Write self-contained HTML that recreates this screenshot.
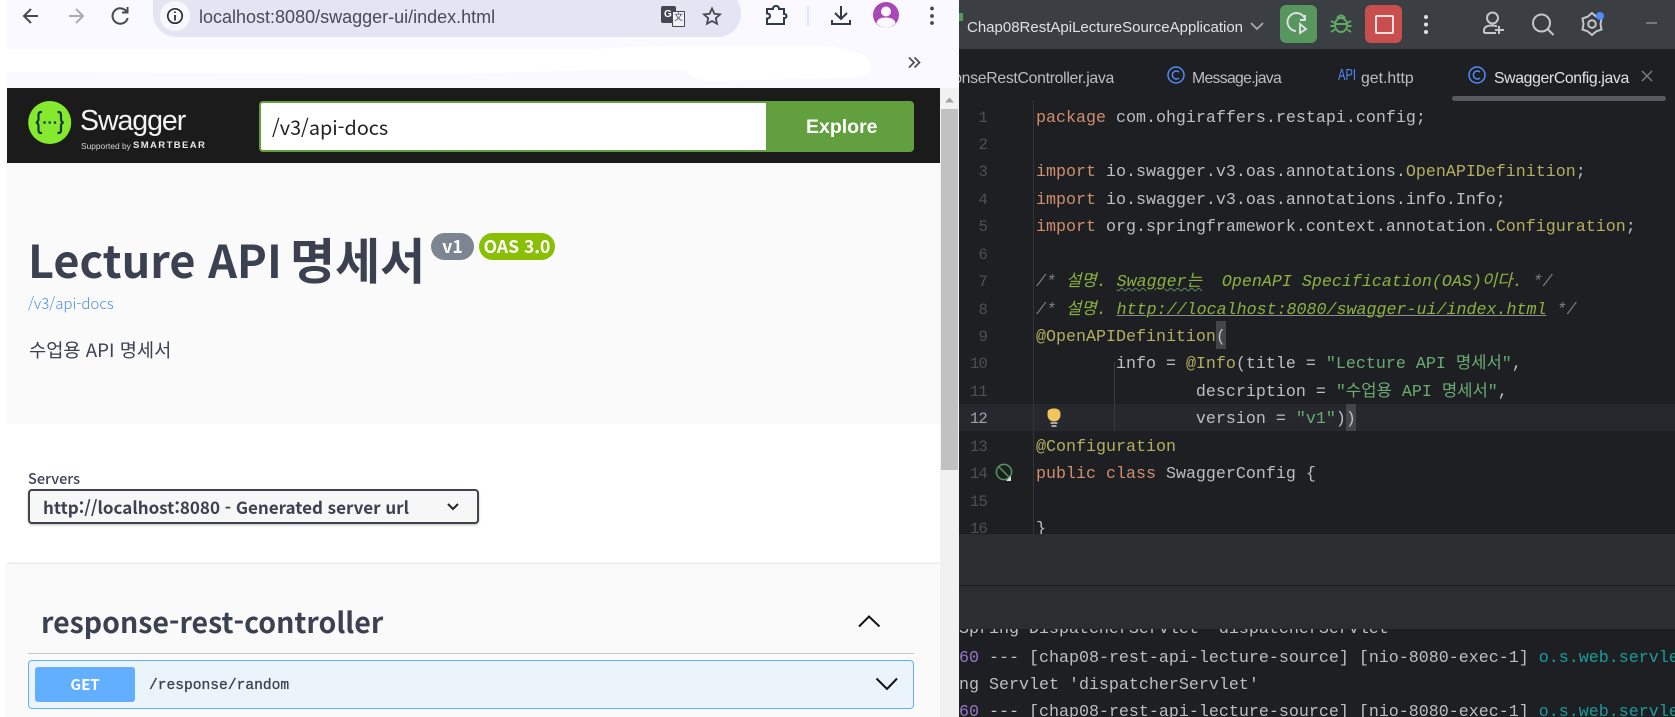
<!DOCTYPE html>
<html lang="ko"><head><meta charset="utf-8"><title>Swagger UI</title>
<style>
html,body{margin:0;padding:0;width:1675px;height:717px;overflow:hidden;background:#fff}
body{position:relative;font-family:"Liberation Sans","Noto Sans CJK KR",sans-serif}
.a{position:absolute}
.t{position:absolute;white-space:nowrap;line-height:1}
.k{font-family:"Noto Sans CJK KR","Liberation Sans",sans-serif}
svg{position:absolute;overflow:visible}
#code{position:absolute;left:959px;top:100px;width:716px;height:434px;background:#1e1f22;overflow:hidden}
.l{position:absolute;left:77px;margin-top:2px;white-space:pre;height:27.43px;line-height:27.43px;font:16.67px/27.43px "Liberation Mono","Noto Sans CJK KR",monospace;color:#bcbec4}
.n{position:absolute;width:28px;text-align:right;left:0;margin-top:2px;height:27.43px;font:15.6px/27.43px "Liberation Mono",monospace;letter-spacing:-.8px;color:#4b5059}
.kw{color:#cf8e6d}.an{color:#b3ae60}.st{color:#6aab73}.cm{color:#7a7e85;font-style:italic}.cg{color:#8bb33f;font-style:italic}
.tab{position:absolute;white-space:nowrap;font-size:15.8px;line-height:1;color:#bcbec4;top:71px}
.c{position:absolute;left:0;white-space:pre;font:16.67px/27.43px "Liberation Mono",monospace;color:#bcbec4}
</style></head><body>

<!-- browser chrome -->
<div class="a" style="left:7px;top:0;width:952px;height:88px;background:#f9f9ff"></div>
<svg style="left:0;top:0" width="959" height="88"><path d="M7 49 L590 49 Q640 46 700 46 L820 46 Q850 48 860 54 Q872 58 870 68 Q868 78 850 78 L710 81 Q690 80 686 70 L600 70 L450 74 L7 72 Z" fill="#fff"/></svg>
<div class="a" style="left:153px;top:-10px;width:588px;height:47px;background:#e3e6f2;border-radius:0 24px 24px 24px/0 24px 24px 24px;border-top-left-radius:0;border-bottom-left-radius:24px"></div>
<div class="a" style="left:160px;top:1px;width:30px;height:30px;border-radius:50%;background:#f7f8fd"></div>
<svg style="left:0;top:0" width="959" height="40" fill="none" stroke="#474a52" stroke-width="2">
<path d="M38 16 H24 M31 9 L24 16 L31 23" stroke-width="2"/>
<path d="M69 16 H83 M76 9 L83 16 L76 23" stroke="#a9abb2"/>
<path d="M126.500 11.500 A7.700 7.700 0 1 0 127.700 18" /><path d="M127.500 7 V12.500 H122" />
<circle cx="175" cy="16" r="7.2" stroke="#2b2d31" stroke-width="1.7"/><path d="M175 15 V20.5 M175 11.5 V13" stroke="#2b2d31" stroke-width="1.8"/>
<path d="M712 8.5 L714.4 13.8 L720 14.4 L715.8 18.2 L717 23.8 L712 21 L707 23.8 L708.2 18.2 L704 14.4 L709.6 13.8 Z" stroke-width="1.8"/>
<path d="M767 9 H773 Q773 6 776 6 Q779 6 779 9 H784 V14 Q786.500 14 786.500 16 Q786.500 18 784 18 V24 H767 V18.500 Q770 18.500 770 16 Q770 13.500 767 13.500 Z" stroke="#2f3a4a" stroke-width="2"/>
<path d="M808 6 V26" stroke="#d3e3fd" stroke-width="1.5"/>
<path d="M841 6 V18 M835 13 L841 19 L847 13 M832 20 V24 H850 V20" stroke="#2f3a4a" stroke-width="2"/>
</svg>
<!-- translate icon -->
<div class="a" style="left:661px;top:6px;width:15px;height:17px;background:#444750;border-radius:2px"></div>
<div class="a" style="left:672px;top:11px;width:11px;height:14px;background:#f1f2f8;border:1px solid #444750;border-radius:1px"></div>
<div class="t" style="left:664px;top:10px;font-size:10px;font-weight:700;color:#fff">G</div>
<div class="t" style="left:674px;top:13px;font-size:9px;color:#444750">文</div>
<svg style="left:0;top:0" width="959" height="40"><circle cx="886" cy="15" r="13" fill="#a847b5"/><circle cx="886" cy="11.500" r="5" fill="#f9f9ff"/><path d="M876.500 23.500 Q877 17.500 886 17.500 Q895 17.500 895.500 23.500 Q891 28 886 28 Q881 28 876.500 23.500Z" fill="#f9f9ff"/>
<circle cx="932" cy="8.500" r="1.900" fill="#424650"/><circle cx="932" cy="16" r="1.900" fill="#424650"/><circle cx="932" cy="23" r="1.900" fill="#424650"/></svg>
<div class="t" style="left:199px;top:8px;font-size:18px;color:#474b55">localhost:8080/swagger-ui/index.html</div>
<svg style="left:0;top:0" width="959" height="88" fill="none" stroke="#4a4d55" stroke-width="1.700"><path d="M909 57.500 L914 62.500 L909 67.500 M914.500 57.500 L919.500 62.500 L914.500 67.500"/></svg>

<!-- swagger header -->
<div class="a" style="left:7px;top:88px;width:933px;height:75px;background:#1b1b1b"></div>
<svg style="left:0;top:0" width="260" height="163"><circle cx="49.700" cy="122.500" r="21.500" fill="#85ea2d"/>
<g fill="none" stroke="#173647" stroke-width="2.200"><path d="M42 112 H41 Q38.500 112 38.500 115 V119 Q38.500 122 36 122.500 Q38.500 123 38.500 126 V130 Q38.500 133 41 133 H42"/><path d="M57.500 112 H58.500 Q61 112 61 115 V119 Q61 122 63.500 122.500 Q61 123 61 126 V130 Q61 133 58.500 133 H57.500"/></g>
<circle cx="44.500" cy="122.500" r="1.300" fill="#173647"/><circle cx="49.700" cy="122.500" r="1.300" fill="#173647"/><circle cx="55" cy="122.500" r="1.300" fill="#173647"/></svg>
<div class="t" style="left:80px;top:107px;font-size:28.500px;color:#f2f2f2;letter-spacing:-1.050px;font-weight:400">Swagger</div>
<div class="t" style="left:81px;top:142px;font-size:8.400px;color:#d5d5d5">Supported by</div>
<div class="t" style="left:133px;top:140.500px;font-size:9.500px;font-weight:700;color:#e8e8e8;letter-spacing:1.400px">SMARTBEAR</div>
<div class="a" style="left:259px;top:101px;width:508px;height:51px;box-sizing:border-box;background:#fff;border:2px solid #62a03f;border-right:0;border-radius:4px 0 0 4px"></div>
<div class="t k" style="left:272px;top:117px;font-size:19.800px;color:#222">/v3/api-docs</div>
<div class="a" style="left:766px;top:101px;width:148px;height:51px;background:#62a03f;border-radius:0 4px 4px 0"></div>
<div class="t" style="left:806px;top:118px;font-size:19.500px;font-weight:700;color:#fff">Explore</div>

<!-- info -->
<div class="a" style="left:7px;top:163px;width:933px;height:261px;background:#fafafa"></div>
<div class="t k" style="left:28px;top:232px;font-size:45px;font-weight:700;color:#3b4151;line-height:54px">Lecture API</div>
<div class="t k" style="left:290px;top:232px;font-size:49px;font-weight:700;color:#3b4151;line-height:54px">명세서</div>
<div class="a" style="left:431px;top:233px;width:43px;height:27px;border-radius:14px;background:#7d8492"></div>
<div class="t k" style="left:431px;top:233px;width:43px;text-align:center;font-size:17.500px;font-weight:700;line-height:27px;color:#fff">v1</div>
<div class="a" style="left:479px;top:233px;width:76px;height:27px;border-radius:14px;background:#89bf04"></div>
<div class="t k" style="left:479px;top:233px;width:76px;text-align:center;font-size:17.500px;font-weight:700;line-height:27px;color:#fff">OAS 3.0</div>
<div class="t k" style="left:28px;top:296px;font-size:15px;font-weight:300;color:#4990e2">/v3/api-docs</div>
<div class="t k" style="left:29px;top:341px;font-size:18.700px;color:#3b4151">수업용 API 명세서</div>

<!-- servers -->
<div class="t k" style="left:28px;top:472px;font-size:14.500px;font-weight:500;color:#3b4151">Servers</div>
<div class="a" style="left:28px;top:489px;width:451px;height:35px;box-sizing:border-box;background:#f7f7f7;border:2px solid #41444e;border-radius:4px;box-shadow:0 1px 2px rgba(0,0,0,.25)"></div>
<div class="t k" style="left:43px;top:498px;font-size:17px;font-weight:700;color:#3b4151">http://localhost:8080 - Generated server url</div>
<svg style="left:0;top:0" width="500" height="530" fill="none" stroke="#222" stroke-width="2"><path d="M448 504 L453 509 L458 504"/></svg>

<!-- section -->
<div class="a" style="left:7px;top:564px;width:933px;height:153px;background:#fafafa;box-shadow:0 -1px 2px rgba(0,0,0,.12)"></div>
<div class="t k" style="left:41px;top:608px;font-size:28.500px;font-weight:700;color:#3b4151">response-rest-controller</div>
<div class="a" style="left:28px;top:653px;width:886px;height:1px;background:#c6c6c8"></div>
<svg style="left:0;top:0" width="940" height="717" fill="none" stroke="#111" stroke-width="2"><path d="M859 626.500 L869 616.500 L879.500 626.500"/></svg>
<div class="a" style="left:28px;top:660px;width:886px;height:49px;box-sizing:border-box;background:#ebf3fb;border:1px solid #61affe;border-radius:4px"></div>
<div class="a" style="left:35px;top:667px;width:100px;height:35px;background:#61affe;border-radius:3px"></div>
<div class="t k" style="left:35px;top:667px;width:100px;text-align:center;font-size:15px;font-weight:700;line-height:35px;color:#fff">GET</div>
<div class="t" style="left:149px;top:678.500px;font-family:'Liberation Mono',monospace;font-size:14.600px;color:#3b4151;-webkit-text-stroke:.3px #3b4151">/response/random</div>
<svg style="left:0;top:0" width="940" height="717" fill="none" stroke="#111" stroke-width="2"><path d="M876.500 678.500 L887 689 L897 678.500"/></svg>

<!-- scrollbar -->
<div class="a" style="left:940px;top:88px;width:19px;height:629px;background:#f1f1f1"></div>
<div class="a" style="left:941px;top:109px;width:17px;height:361px;background:#c1c1c1"></div>
<svg style="left:0;top:0" width="959" height="110"><path d="M945 102.500 L949.500 97.500 L954 102.500 Z" fill="#a3a3a3"/></svg>

<!-- IDE toolbar -->
<div class="a" style="left:959px;top:0;width:716px;height:49px;background:#3b3e42"></div>
<div class="a" style="left:959px;top:13px;width:4px;height:8px;background:#57965c"></div>
<div class="t" style="left:967px;top:20px;font-size:15px;color:#dfe1e5">Chap08RestApiLectureSourceApplication</div>
<svg style="left:0;top:0" width="1675" height="49" fill="none"><path d="M1251 23 L1257 29 L1263 23" stroke="#a9abb2" stroke-width="1.700"/></svg>
<div class="a" style="left:1280px;top:5px;width:37px;height:38px;border-radius:6px;background:#57965c"></div>
<svg style="left:0;top:0" width="1675" height="49" fill="none" stroke="#dfe1e5" stroke-width="1.900">
<path d="M1296 31 A9 9 0 1 1 1305 19 M1305 15 V20 H1300"/><path d="M1300 24 L1306 29 L1300 33 Z"/>
<g stroke="#5fad65"><ellipse cx="1341" cy="25" rx="6" ry="7"/><path d="M1337 18 Q1341 13 1345 18 M1331 21 L1335 23 M1351 21 L1347 23 M1330.500 26 H1335 M1351.500 26 H1347 M1331 32 L1335 29.500 M1351 32 L1347 29.500 M1335 24 H1347"/></g>
</svg>
<div class="a" style="left:1365px;top:5px;width:37px;height:38px;border-radius:6px;background:#c94f4f"></div>
<div class="a" style="left:1375px;top:15px;width:15px;height:15px;box-sizing:content-box;border:2px solid #f0e0e0;border-radius:2px"></div>
<svg style="left:0;top:0" width="1675" height="49" fill="none" stroke="#c4c6cc" stroke-width="2">
<circle cx="1426" cy="17" r="2" fill="#dfe1e5" stroke="none"/><circle cx="1426" cy="24.500" r="2" fill="#dfe1e5" stroke="none"/><circle cx="1426" cy="32" r="2" fill="#dfe1e5" stroke="none"/>
<circle cx="1492.500" cy="18" r="5.500"/><path d="M1484 33 V30.500 Q1484 25.500 1492 25.500 Q1495 25.500 1497 26.500 M1484 33 H1496 M1499 26 V34 M1495 30 H1504"/>
<circle cx="1541.500" cy="23" r="8.500"/><path d="M1548 29.500 L1553.500 35"/>
<path d="M1592 13 L1596.250 16.640 L1601.530 18.500 L1600.500 24 L1601.530 29.500 L1596.250 31.360 L1592 35 L1587.750 31.360 L1582.470 29.500 L1583.500 24 L1582.470 18.500 L1587.750 16.640 Z" stroke-linejoin="round"/><circle cx="1592" cy="24" r="3.800"/>
<path d="M1646 23 H1657" stroke="#8a8c92" stroke-width="1.500"/></svg>
<div class="a" style="left:1596px;top:11.500px;width:8px;height:8px;border-radius:50%;background:#548af7"></div>

<!-- tabs -->
<div class="a" style="left:959px;top:49px;width:716px;height:51px;background:#1e1f22"></div>
<div class="a" style="left:959px;top:100px;width:716px;height:1px;background:#393b40"></div>
<div class="tab" style="left:959px;overflow:hidden;width:155px;direction:rtl;letter-spacing:-.3px">onseRestController.java</div>
<div class="tab" style="left:1192px;letter-spacing:-.7px">Message.java</div>
<div class="tab" style="left:1361px">get.http</div>
<div class="tab" style="left:1494px;color:#dfe1e5;letter-spacing:-.36px">SwaggerConfig.java</div>
<svg style="left:0;top:0" width="1675" height="110" fill="none">
<circle cx="1176" cy="75" r="8" stroke="#548af7" stroke-width="1.500"/><path d="M1179 72 A4 4 0 1 0 1179 78" stroke="#548af7" stroke-width="1.500"/>
<circle cx="1477" cy="75" r="8" stroke="#548af7" stroke-width="1.500"/><path d="M1480 72 A4 4 0 1 0 1480 78" stroke="#548af7" stroke-width="1.500"/>
<path d="M1642 71 L1652 81 M1652 71 L1642 81" stroke="#7a7e85" stroke-width="1.400"/>
<path d="M1662 116 L1666 120 L1675 110" stroke="#5fad65" stroke-width="2"/><path d="M1662 125 L1665 123 L1668 125 L1671 123 L1675 125" stroke="#5fad65" stroke-width="1.200"/>
</svg>
<div class="t" style="left:1338px;top:68px;font-family:'Liberation Sans',sans-serif;font-size:15.500px;color:#548af7;transform:scaleX(.72);transform-origin:left">API</div>
<div class="a" style="left:1452px;top:96px;width:214px;height:5px;border-radius:3px;background:#585a60;z-index:3"></div>

<!-- editor -->
<div id="code">
<div class="a" style="left:0;top:304px;width:716px;height:27px;background:#26282e"></div>
<div class="a" style="left:74px;top:0;width:1px;height:434px;background:#313438"></div>
<div class="a" style="left:155px;top:262px;width:1px;height:69px;background:#393b40"></div>
<div class="a" style="left:257px;top:221px;width:10px;height:28px;background:#43454a"></div>
<div class="a" style="left:387px;top:304px;width:10px;height:27px;background:#43454a"></div>

<div class="n" style="top:2.500px">1</div><div class="n" style="top:29.900px">2</div><div class="n" style="top:57.400px">3</div><div class="n" style="top:84.800px">4</div><div class="n" style="top:112.200px">5</div><div class="n" style="top:139.600px">6</div><div class="n" style="top:167.100px">7</div><div class="n" style="top:194.500px">8</div><div class="n" style="top:221.900px">9</div><div class="n" style="top:249.400px">10</div><div class="n" style="top:276.800px">11</div><div class="n" style="top:304.200px;color:#a1a3ab">12</div><div class="n" style="top:331.700px">13</div><div class="n" style="top:359.100px">14</div><div class="n" style="top:386.500px">15</div><div class="n" style="top:414px">16</div>

<div class="l" style="top:2.500px"><span class="kw">package</span> com.ohgiraffers.restapi.config;</div>
<div class="l" style="top:57.400px"><span class="kw">import</span> io.swagger.v3.oas.annotations.<span class="an">OpenAPIDefinition</span>;</div>
<div class="l" style="top:84.800px"><span class="kw">import</span> io.swagger.v3.oas.annotations.info.Info;</div>
<div class="l" style="top:112.200px"><span class="kw">import</span> org.springframework.context.annotation.<span class="an">Configuration</span>;</div>
<div class="l" style="top:167.100px"><span class="cm">/* </span><span class="cg">설명. <span style="text-decoration:underline wavy #5f8f5f 1px">Swagger는</span>  OpenAPI Specification(OAS)이다.</span><span class="cm"> */</span></div>
<div class="l" style="top:194.500px"><span class="cm">/* </span><span class="cg">설명. <span style="text-decoration:underline #8a8c92 1px">http://localhost:8080/swagger-ui/index.html</span></span><span class="cm"> */</span></div>
<div class="l" style="top:221.900px"><span class="an">@OpenAPIDefinition</span>(</div>
<div class="l" style="top:249.400px">        info = <span class="an">@Info</span>(title = <span class="st">"Lecture API 명세서"</span>,</div>
<div class="l" style="top:276.800px">                description = <span class="st">"수업용 API 명세서"</span>,</div>
<div class="l" style="top:304.200px">                version = <span class="st">"v1"</span>))</div>
<div class="l" style="top:331.700px"><span class="an">@Configuration</span></div>
<div class="l" style="top:359.100px"><span class="kw">public class</span> SwaggerConfig {</div>
<div class="l" style="top:414px">}</div>
<svg style="left:0;top:0" width="100" height="434" fill="none">
<circle cx="95" cy="315" r="6.500" fill="#f2c55c"/><path d="M88.500 312 Q89 308.500 95 308.500 Q101 308.500 101.500 313 Q101.500 318 98 320 H92 Q88.500 318 88.500 312Z" fill="#f2c55c"/><path d="M91.500 323 H98.500 M92.500 326 H97.500" stroke="#ced0d6" stroke-width="1.500"/>
<circle cx="45" cy="372" r="7.600" stroke="#57965c" stroke-width="1.500"/><path d="M40 367 L50 377" stroke="#57965c" stroke-width="1.500"/><path d="M47 381 L52 381 L52 376 Z" fill="#dfe1e5"/>
</svg>
</div>

<!-- tool panel + console -->
<div class="a" style="left:959px;top:534px;width:716px;height:95px;background:#2b2d30"></div>
<div class="a" style="left:959px;top:585px;width:716px;height:1px;background:#1e1f22"></div>
<div class="a" style="left:959px;top:629px;width:716px;height:88px;background:#1e1f22;overflow:hidden">
<div class="c" style="top:-13px">Spring DispatcherServlet 'dispatcherServlet'</div>
<div class="c" style="top:16px"><span style="color:#9876c8">60</span> --- [chap08-rest-api-lecture-source] [nio-8080-exec-1] <span style="color:#1a9c9c">o.s.web.servlet</span></div>
<div class="c" style="top:43px">ng Servlet 'dispatcherServlet'</div>
<div class="c" style="top:70px"><span style="color:#9876c8">60</span> --- [chap08-rest-api-lecture-source] [nio-8080-exec-1] <span style="color:#1a9c9c">o.s.web.servlet</span></div>
</div>
</body></html>
